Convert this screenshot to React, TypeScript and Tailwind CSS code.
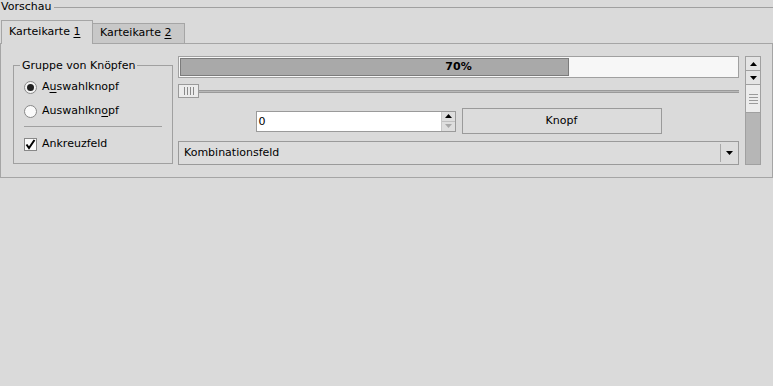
import React from 'react';

const GripLines = ({ vertical }: { vertical?: boolean }) => (
  <div className={vertical ? 'flex flex-col gap-[2px]' : 'flex gap-[2px]'}>
    {[0, 1, 2, 3].map((i) => (
      <div key={i} className={vertical ? 'w-[9px] h-px bg-[#9a9a9a]' : 'w-px h-[8px] bg-[#8a8a8a]'} />
    ))}
  </div>
);

const Tri = ({ up, faded }: { up?: boolean; faded?: boolean }) => (
  <svg width="7" height="4" viewBox="0 0 7 4">
    <polygon points={up ? '0,4 7,4 3.5,0' : '0,0 7,0 3.5,4'} fill={faded ? '#a8a8a8' : '#000'} />
  </svg>
);

const Tab = ({ label, mn, active }: { label: string; mn: string; active?: boolean }) => (
  <div
    className={
      active
        ? 'h-[24px] w-[92px] border border-b-0 border-[#a5a5a5] bg-[#dadada] pl-[7px] pt-[4px] -mb-px relative z-10'
        : 'h-[20px] w-[92px] border border-l-0 border-b-0 border-[#a5a5a5] bg-[#c8c8c8] pl-[7px] pt-[2px]'
    }
  >
    {label} <span className="underline underline-offset-2">{mn}</span>
  </div>
);

export default function App() {
  return (
    <div
      className="w-[773px] h-[386px] bg-[#dadada] text-[11px] text-black leading-[14px] overflow-hidden"
      style={{ fontFamily: '"DejaVu Sans", Verdana, sans-serif' }}
    >
      <div className="flex items-center h-[14px] pl-[1px]">
        <span>Vorschau</span>
        <div className="ml-[3px] flex-1 h-px bg-[#a0a0a0]" />
      </div>

      <div className="flex items-end h-[29px] pl-[1px]">
        <Tab label="Karteikarte" mn="1" active />
        <Tab label="Karteikarte" mn="2" />
      </div>

      <div className="w-[773px] h-[135px] border border-[#a5a5a5] flex pl-[12px]">
        {/* group box */}
        <div className="relative mt-[21px] w-[160px] h-[99px] border border-[#a0a0a0] shrink-0">
          <span className="absolute -top-[7px] left-[6px] bg-[#dadada] px-[2px]">Gruppe von Knöpfen</span>
          <div className="flex items-center h-[14px] mt-[14px] pl-[10px]">
            <div className="w-[13px] h-[13px] rounded-full border border-[#888] bg-[#f4f4f4] flex items-center justify-center">
              <div className="w-[7px] h-[7px] rounded-full bg-[#222]" />
            </div>
            <span className="ml-[5px]">
              A<span className="underline underline-offset-2">u</span>swahlknopf
            </span>
          </div>
          <div className="flex items-center h-[14px] mt-[10px] pl-[10px]">
            <div className="w-[13px] h-[13px] rounded-full border border-[#888] bg-[#fafafa]" />
            <span className="ml-[5px]">
              Auswahlkn<span className="underline underline-offset-2">o</span>pf
            </span>
          </div>
          <div className="mx-[10px] mt-[8px] h-px bg-[#a0a0a0]" />
          <div className="flex items-center h-[14px] mt-[10px] pl-[10px]">
            <div className="w-[13px] h-[13px] border border-[#888] bg-[#fafafa] flex items-center justify-center">
              <svg width="11" height="11" viewBox="0 0 11 11">
                <path d="M1.5 5.5 L4 9 L9.5 1" fill="none" stroke="#000" strokeWidth="2" />
              </svg>
            </div>
            <span className="ml-[5px]">Ankreuzfeld</span>
          </div>
        </div>

        {/* right column */}
        <div className="ml-[5px] mt-[12px] w-[561px] flex flex-col">
          <div className="h-[22px] border border-[#a0a0a0] bg-[#f7f7f7] relative p-px">
            <div className="h-full w-[389px] bg-[#a9a9a9] border border-[#7c7c7c]" />
            <span className="absolute inset-0 flex items-center justify-center font-bold">70%</span>
          </div>
          <div className="relative h-[14px] mt-[6px] flex items-center">
            <div className="w-full h-[3px] bg-[#b8b8b8] border-y border-[#9a9a9a]" />
            <div className="absolute left-0 top-0 w-[21px] h-[14px] border border-[#9a9a9a] bg-[#ececec] flex items-center justify-center">
              <GripLines />
            </div>
          </div>
          <div className="flex justify-center gap-[6px] mt-[10px] h-[26px] items-center">
            <div className="w-[200px] h-[21px] border border-[#9a9a9a] bg-white flex">
              <span className="flex-1 pl-[2px] leading-[19px]">0</span>
              <div className="w-[14px] flex flex-col border-l border-[#c8c8c8]">
                <div className="h-[10px] bg-[#dedede] border-b border-[#c0c0c0] flex items-center justify-center">
                  <Tri up />
                </div>
                <div className="flex-1 bg-[#dedede] flex items-center justify-center">
                  <Tri faded />
                </div>
              </div>
            </div>
            <div className="w-[200px] h-[26px] border border-[#9a9a9a] bg-[#dcdcdc] flex items-center justify-center">
              Knopf
            </div>
          </div>
          <div className="mt-[7px] h-[24px] border border-[#9a9a9a] bg-[#dcdcdc] flex items-center">
            <span className="flex-1 pl-[5px]">Kombinationsfeld</span>
            <div className="w-px h-[18px] bg-[#a8a8a8]" />
            <div className="w-[17px] flex justify-center">
              <Tri />
            </div>
          </div>
        </div>

        {/* scrollbar */}
        <div className="ml-[6px] mt-[12px] w-[16px] h-[109px] border border-[#a0a0a0] flex flex-col bg-[#b6b6b6]">
          <div className="h-[14px] bg-[#e4e4e4] border-b border-[#a0a0a0] flex items-center justify-center">
            <Tri up />
          </div>
          <div className="h-[14px] bg-[#e4e4e4] border-b border-[#a0a0a0] flex items-center justify-center">
            <Tri />
          </div>
          <div className="h-[28px] bg-[#ececec] border-b border-[#a0a0a0] flex items-center justify-center">
            <GripLines vertical />
          </div>
        </div>
      </div>
    </div>
  );
}
